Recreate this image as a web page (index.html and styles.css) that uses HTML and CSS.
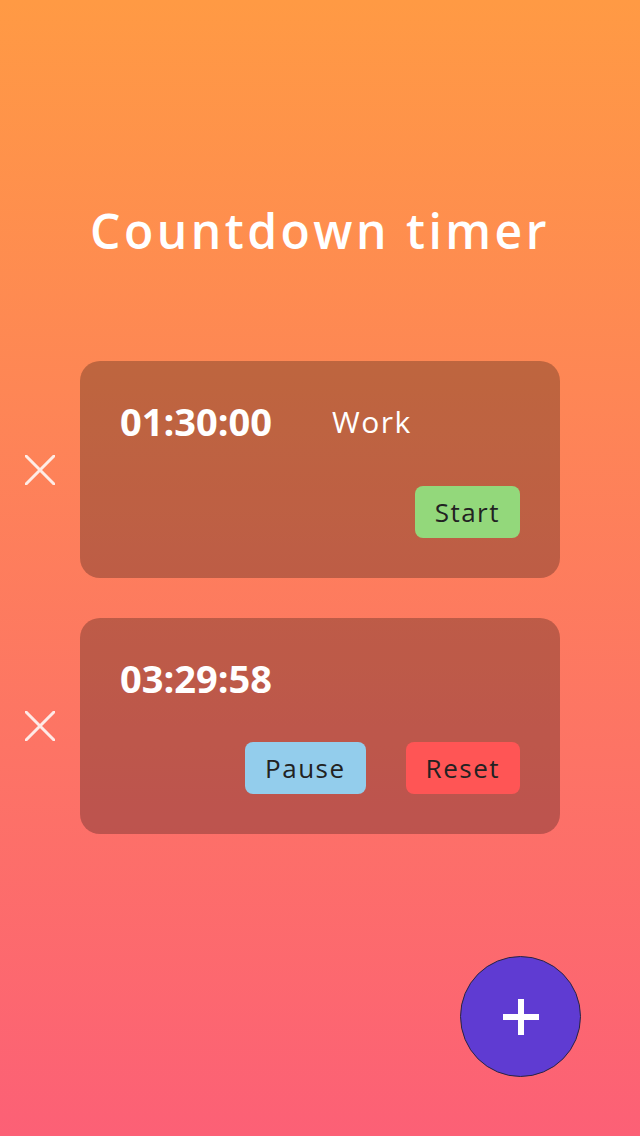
FILE: index.html
```html
<!DOCTYPE html>
<html lang="en">
<head>
<meta charset="utf-8">
<title>Countdown timer</title>
<link rel="stylesheet" href="styles.css">
</head>
<body>
<div class="app">
  <h1 class="title">Countdown timer</h1>
  <div class="timers">
    <div class="row">
      <div class="delete">
        <svg width="30" height="30" viewBox="0 0 30 30"><path d="M1 1 L29 29 M29 1 L1 29" stroke="#fff" stroke-width="3" stroke-linecap="round" fill="none"/></svg>
      </div>
      <div class="card">
        <div class="card-top">
          <span class="time">01:30:00</span>
          <span class="label">Work</span>
        </div>
        <div class="actions">
          <button class="btn btn-start">Start</button>
        </div>
      </div>
    </div>
    <div class="row">
      <div class="delete">
        <svg width="30" height="30" viewBox="0 0 30 30"><path d="M1 1 L29 29 M29 1 L1 29" stroke="#fff" stroke-width="3" stroke-linecap="round" fill="none"/></svg>
      </div>
      <div class="card">
        <div class="card-top">
          <span class="time">03:29:58</span>
        </div>
        <div class="actions">
          <button class="btn btn-pause">Pause</button>
          <button class="btn btn-reset">Reset</button>
        </div>
      </div>
    </div>
  </div>
  <button class="fab" aria-label="Add timer">
    <svg width="40" height="40" viewBox="0 0 40 40"><path d="M20 2 V38 M2 20 H38" stroke="#fff" stroke-width="6" fill="none"/></svg>
  </button>
</div>
</body>
</html>
```
FILE: styles.css
```css
html, body {
  margin: 0;
  padding: 0;
}
body {
  width: 640px;
  height: 1136px;
  background: linear-gradient(180deg, #ff9a44 0%, #fc6076 100%);
  font-family: "Open Sans", "DejaVu Sans", sans-serif;
  overflow: hidden;
}
.app {
  position: relative;
  height: 1136px;
  display: flex;
  flex-direction: column;
}
.title {
  margin: 0;
  padding-top: 199px;
  line-height: 64px;
  font-size: 48px;
  font-weight: 600;
  color: #fff;
  text-align: center;
  letter-spacing: 3.5px;
}
.timers {
  margin-top: 98px;
  display: flex;
  flex-direction: column;
  gap: 40px;
}
.row {
  display: flex;
  align-items: center;
}
.delete {
  width: 80px;
  display: flex;
  justify-content: center;
  opacity: 0.85;
}
.delete svg {
  display: block;
}
.card {
  width: 480px;
  box-sizing: border-box;
  padding: 40px;
  border-radius: 20px;
  background: rgba(0, 0, 0, 0.25);
  display: flex;
  flex-direction: column;
}
.card-top {
  display: flex;
  align-items: flex-start;
  gap: 60px;
  height: 46px;
}
.time {
  font-size: 38px;
  font-weight: 700;
  color: #fff;
  line-height: 40px;
}
.label {
  font-size: 30px;
  font-weight: 400;
  color: #fff;
  line-height: 42px;
  letter-spacing: 1.5px;
}
.actions {
  margin-top: 39px;
  display: flex;
  justify-content: flex-end;
  gap: 40px;
}
.card + .card .actions,
.row + .row .actions {
  margin-top: 38px;
}
.btn {
  border: none;
  border-radius: 8px;
  height: 52px;
  padding: 0 20px;
  font-family: inherit;
  font-size: 26px;
  letter-spacing: 1.5px;
  color: #222;
  line-height: 52px;
}
.btn-start { background: #93d87b; }
.btn-pause { background: #93cdec; }
.btn-reset { background: #ff5555; }
.fab {
  position: absolute;
  right: 59px;
  bottom: 59px;
  width: 121px;
  height: 121px;
  border-radius: 50%;
  border: 1.5px solid #2b2540;
  background: #5f3bd2;
  display: flex;
  align-items: center;
  justify-content: center;
  padding: 0;
}
.fab svg {
  display: block;
}
```
